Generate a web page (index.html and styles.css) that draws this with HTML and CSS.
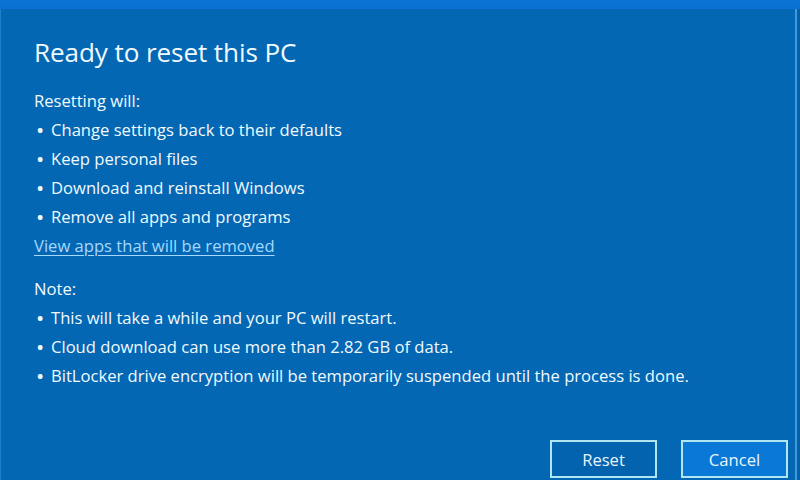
FILE: index.html
```html
<!DOCTYPE html>
<html lang="en">
<head>
<meta charset="utf-8">
<title>Ready to reset this PC</title>
<link rel="stylesheet" href="styles.css">
</head>
<body>
<div class="screen">
  <div class="topbar"></div>
  <div class="frame">
    <div class="dialog">
      <h1 class="title">Ready to reset this PC</h1>
      <p class="label">Resetting will:</p>
      <ul class="list">
        <li><span class="dot">•</span><span>Change settings back to their defaults</span></li>
        <li><span class="dot">•</span><span>Keep personal files</span></li>
        <li><span class="dot">•</span><span>Download and reinstall Windows</span></li>
        <li><span class="dot">•</span><span>Remove all apps and programs</span></li>
      </ul>
      <a class="link" href="#">View apps that will be removed</a>
      <p class="label note">Note:</p>
      <ul class="list">
        <li><span class="dot">•</span><span>This will take a while and your PC will restart.</span></li>
        <li><span class="dot">•</span><span>Cloud download can use more than 2.82 GB of data.</span></li>
        <li><span class="dot">•</span><span>BitLocker drive encryption will be temporarily suspended until the process is done.</span></li>
      </ul>
      <div class="actions">
        <button class="btn">Reset</button>
        <button class="btn btn-primary">Cancel</button>
      </div>
    </div>
    <div class="edge"></div>
  </div>
</div>
</body>
</html>
```
FILE: styles.css
```css
html, body {
  margin: 0;
  padding: 0;
}
body {
  width: 800px;
  height: 480px;
  overflow: hidden;
  background: #0560ab;
  font-family: "Open Sans", "Noto Sans", sans-serif;
  color: #f0faff;
}
.screen {
  display: flex;
  flex-direction: column;
  height: 480px;
}
.topbar {
  height: 9px;
  background: linear-gradient(#0b74d8, #0a70d2);
}
.frame {
  flex: 1;
  display: flex;
}
.dialog {
  flex: 1;
  display: flex;
  flex-direction: column;
  align-items: flex-start;
  padding: 0 0 0 33px;
  background: #0367b4;
  border-left: 1px solid #1b7fcc;
  border-right: 2px solid #3f9ad8;
}
.edge {
  width: 3px;
  background: #045ea8;
}
.title {
  margin: 26px 0 0;
  font-size: 26.1px;
  font-weight: 400;
  line-height: 34px;
  letter-spacing: -0.1px;
}
.label {
  margin: 17px 0 0;
  font-size: 16.6px;
  line-height: 29px;
}
.note {
  margin-top: 14px;
}
.list {
  list-style: none;
  margin: 0;
  padding: 0;
}
.list li {
  display: flex;
  font-size: 16.6px;
  line-height: 29px;
}
.dot {
  width: 14px;
  margin-left: 3px;
  flex: none;
  font-weight: 700;
}
.link {
  font-size: 16.6px;
  line-height: 29px;
  color: #a5d9ff;
  text-decoration: underline;
  text-underline-offset: 3px;
}
.actions {
  margin-top: auto;
  align-self: stretch;
  display: flex;
  justify-content: flex-end;
  gap: 24px;
  padding: 0 7px 2px 0;
}
.btn {
  width: 107px;
  height: 38px;
  border: 2px solid #b0e6f2;
  background: #0363ae;
  color: #e9f6ff;
  font-family: inherit;
  font-size: 16.6px;
  padding: 0;
}
.btn-primary {
  background: #0a78d6;
}
```
